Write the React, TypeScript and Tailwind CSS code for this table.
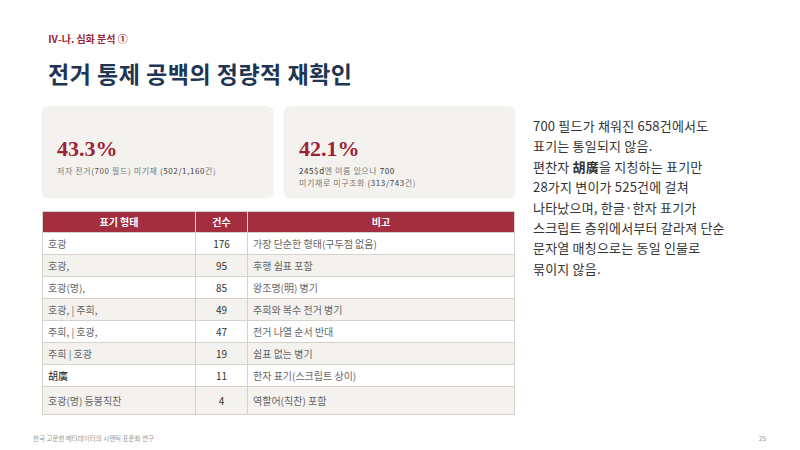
const kr = { fontFamily: '"Noto Sans CJK KR", "Noto Sans", sans-serif' };
const serif = { fontFamily: '"Liberation Serif", "DejaVu Serif", serif' };

const rows = [
  { form: '호광', n: '176', note: '가장 단순한 형태(구두점 없음)' },
  { form: '호광,', n: '95', note: '후행 쉼표 포함' },
  { form: '호광(명),', n: '85', note: '왕조명(明) 병기' },
  { form: '호광, | 주희,', n: '49', note: '주희와 복수 전거 병기' },
  { form: '주희, | 호광,', n: '47', note: '전거 나열 순서 반대' },
  { form: '주희 | 호광', n: '19', note: '쉼표 없는 병기' },
  { form: '胡廣', n: '11', note: '한자 표기(스크립트 상이)', dark: true },
  { form: '호광(명) 등봉칙찬', n: '4', note: '역할어(칙찬) 포함', tall: true },
];

const lines = [
  '700 필드가 채워진 658건에서도',
  '표기는 통일되지 않음.',
  null,
  '28가지 변이가 525건에 걸쳐',
  '나타났으며, 한글·한자 표기가',
  '스크립트 층위에서부터 갈라져 단순',
  '문자열 매칭으로는 동일 인물로',
  '묶이지 않음.',
];

export default function App() {
  return (
    <div className="w-[800px] h-[450px] bg-white relative overflow-hidden" style={kr}>
      <div className="pl-[48px] pt-[34px]">
        <div className="text-[10px] font-bold text-[#9b2335] leading-none">Ⅳ-나. 심화 분석 ①</div>
        <h1 className="mt-[18px] text-[23px] font-bold text-[#1e3553] tracking-[0.5px] leading-none">
          전거 통제 공백의 정량적 재확인
        </h1>
      </div>

      <div className="flex mt-[21px] pl-[42px] gap-[18px]">
        <div className="w-[473px] flex flex-col">
          <div className="flex gap-[11px]">
            <div className="w-[231px] h-[91px] rounded-[6px] bg-[#f4f2ee] shadow-[0_1px_2px_rgba(0,0,0,0.08)] px-[15px] pt-[32px]">
              <div className="text-[22px] font-bold text-[#9b2335] leading-none" style={serif}>43.3%</div>
              <div className="mt-[5px] text-[8px] tracking-[0.6px] text-[#777] leading-[12px]">
                저자 전거<span className="text-[#555]">(700</span> 필드) 미기재 <span className="text-[#444]">(502/1,160</span>건)
              </div>
            </div>
            <div className="w-[231px] h-[91px] rounded-[6px] bg-[#f4f2ee] shadow-[0_1px_2px_rgba(0,0,0,0.08)] px-[15px] pt-[32px]">
              <div className="text-[22px] font-bold text-[#9b2335] leading-none" style={serif}>42.1%</div>
              <div className="mt-[5px] text-[8px] tracking-[0.6px] text-[#777] leading-[12px]">
                <span className="text-[#333]">245$d</span>엔 이름 있으나 <span className="text-[#333]">700</span>
                <br />
                미기재로 미구조화 <span className="text-[#444]">(313/743</span>건)
              </div>
            </div>
          </div>

          <table className="mt-[14px] w-[473px] border-collapse text-[10px] table-fixed">
            <colgroup>
              <col className="w-[153px]" />
              <col className="w-[52px]" />
              <col />
            </colgroup>
            <thead>
              <tr className="bg-[#a32e40] text-white h-[21px]">
                <th className="font-bold border border-[#d8d3ca] leading-none">표기 형태</th>
                <th className="font-bold border border-[#d8d3ca] leading-none">건수</th>
                <th className="font-bold border border-[#d8d3ca] leading-none">비고</th>
              </tr>
            </thead>
            <tbody>
              {rows.map((r, i) => (
                <tr
                  key={i}
                  className={(i % 2 === 1 ? 'bg-[#f4f2ee] ' : 'bg-white ') + (r.tall ? 'h-[28px]' : 'h-[22px]')}
                >
                  <td className={'border border-[#d8d3ca] px-[5px] leading-none ' + (r.dark ? 'text-[#222]' : 'text-[#666]')}>
                    {r.form}
                  </td>
                  <td className="border border-[#d8d3ca] text-center text-[#333] leading-none">{r.n}</td>
                  <td className="border border-[#d8d3ca] px-[5px] text-[#666] leading-none">{r.note}</td>
                </tr>
              ))}
            </tbody>
          </table>
        </div>

        <div className="pt-[10px] text-[13px] tracking-[0.2px] text-[#333] leading-[20.4px]">
          {lines.map((l, i) =>
            l === null ? (
              <div key={i}>
                편찬자 <span className="font-bold">胡廣</span>을 지칭하는 표기만
              </div>
            ) : (
              <div key={i}>{l}</div>
            )
          )}
        </div>
      </div>

      <div className="absolute left-[33px] bottom-[9px] text-[6.5px] text-[#999] leading-none">
        한국 고문헌 메타데이터의 시맨틱 표준화 연구
      </div>
      <div className="absolute right-[34px] bottom-[9px] text-[6.5px] text-[#999] leading-none">25</div>
    </div>
  );
}
